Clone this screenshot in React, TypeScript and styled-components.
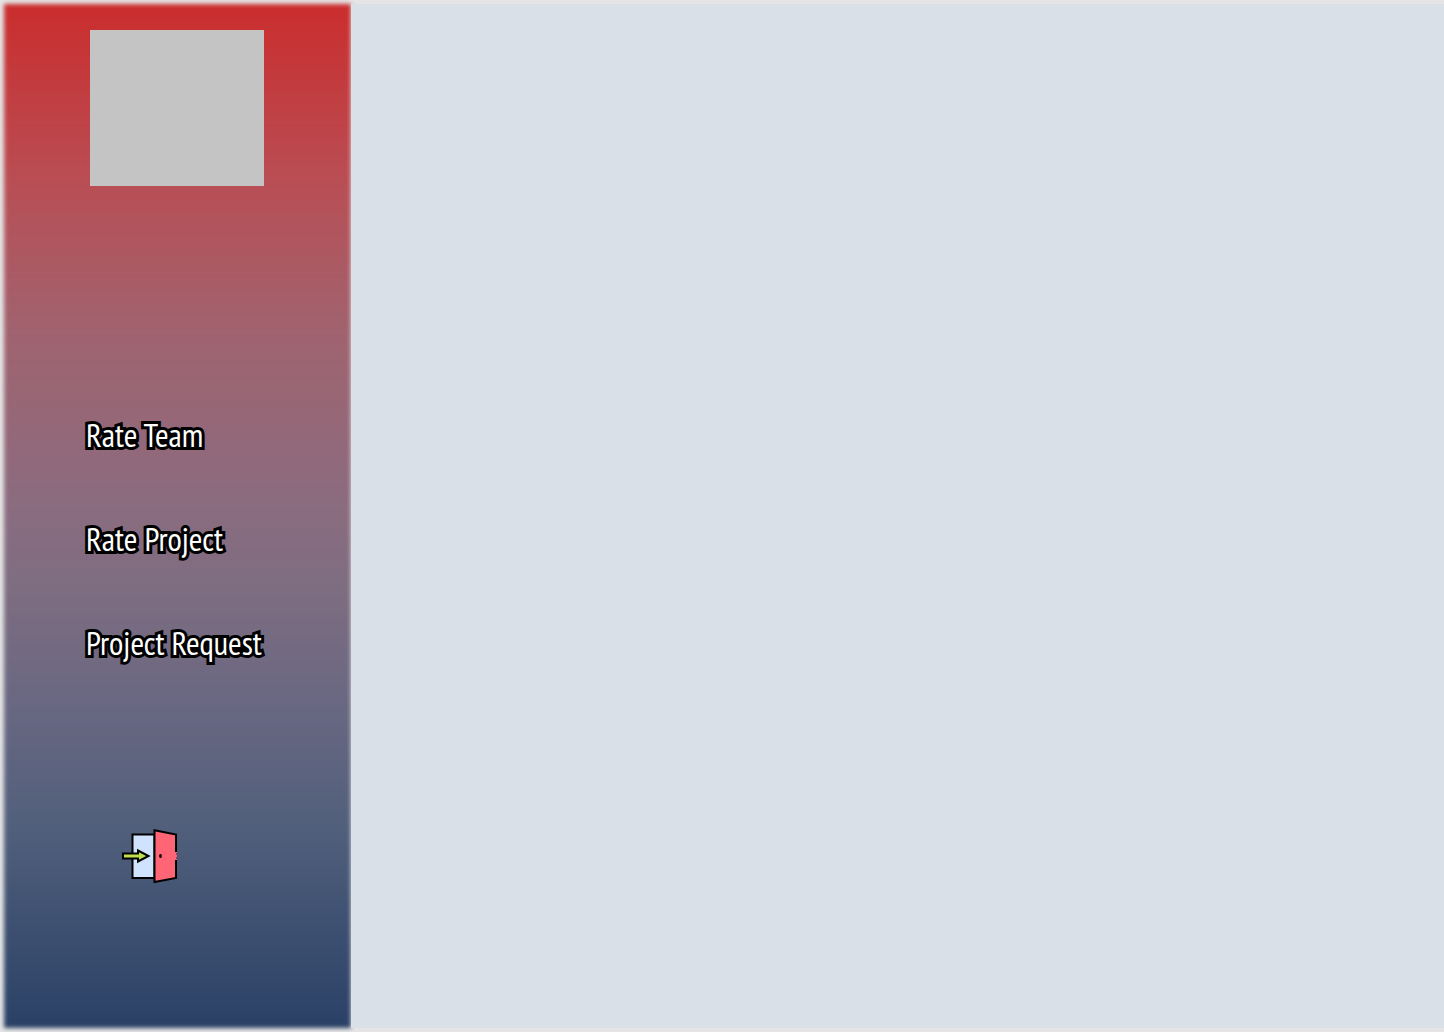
import React from "react";
import styled, { createGlobalStyle } from "styled-components";

const GlobalStyle = createGlobalStyle`
  *, *::before, *::after { box-sizing: border-box; }
  body {
    margin: 0;
    background: #e5e5e5;
    font-family: "PT Sans Narrow", "Open Sans Condensed", "Noto Sans", sans-serif;
  }
`;

const Page = styled.div`
  display: flex;
  min-height: 100vh;
  padding: 4px 0 4px 4px;
`;

const Sidebar = styled.aside`
  position: relative;
  z-index: 0;
  flex: 0 0 347px;
  display: flex;
  flex-direction: column;
  align-items: flex-start;
  padding: 26px 40px 26px 82px;

  &::before {
    content: "";
    position: absolute;
    inset: 0;
    z-index: -1;
    background: linear-gradient(
      180deg,
      #cb2d2d 0%,
      #b84f56 18%,
      #a0636f 32%,
      #8b6c80 49%,
      #7e6d81 57%,
      #6a6882 68%,
      #52607c 80%,
      #2a4166 100%
    );
    filter: blur(2px);
  }
`;

const Picture = styled.div`
  width: 174px;
  height: 156px;
  margin-left: 4px;
  background: #c4c4c4;
`;

const Menu = styled.nav`
  display: flex;
  flex-direction: column;
  gap: 60px;
  margin-top: 227px;
`;

const MenuLink = styled.a`
  color: #fff;
  font-size: 33px;
  line-height: 44px;
  white-space: nowrap;
  text-decoration: none;
  -webkit-text-stroke: 6px #000;
  paint-order: stroke fill;
`;

const ExitButton = styled.button`
  width: 56px;
  height: 56px;
  margin: 163px 0 0 36px;
  padding: 0;
  border: 0;
  background: none;
  cursor: pointer;

  svg { display: block; }
`;

const Content = styled.main`
  position: relative;
  z-index: 1;
  flex: 1;
  background: #d9e0e8;
`;

const links = ["Rate Team", "Rate Project", "Project Request"];

function ExitIcon() {
  return (
    <svg width="56" height="56" viewBox="0 0 56 56" aria-hidden="true" stroke="#000" strokeWidth="2">
      <path d="M10.500 6.500H32.500V50H10.500Z" fill="#cfe3ff" />
      <path d="M32.500 2.200L54 6.500V50L32.500 54Z" fill="#ff6575" />
      <path d="M54 24v8" stroke="#ff6575" strokeWidth="2" />
      <path d="M54.500 25v2M54.500 29v2" stroke="#8a4058" strokeWidth="1" />
      <ellipse cx="38.500" cy="28" rx="1.400" ry="2" fill="#000" stroke="none" />
      <path d="M1 25.500H16V22.500L26.500 28L16 33.500V30.500H1Z" fill="#c3e04a" />
    </svg>
  );
}

export default function App() {
  return (
    <>
      <GlobalStyle />
      <Page>
        <Sidebar>
          <Picture />
          <Menu>
            {links.map((label) => (
              <MenuLink href="#" key={label}>{label}</MenuLink>
            ))}
          </Menu>
          <ExitButton type="button" aria-label="Exit">
            <ExitIcon />
          </ExitButton>
        </Sidebar>
        <Content />
      </Page>
    </>
  );
}
